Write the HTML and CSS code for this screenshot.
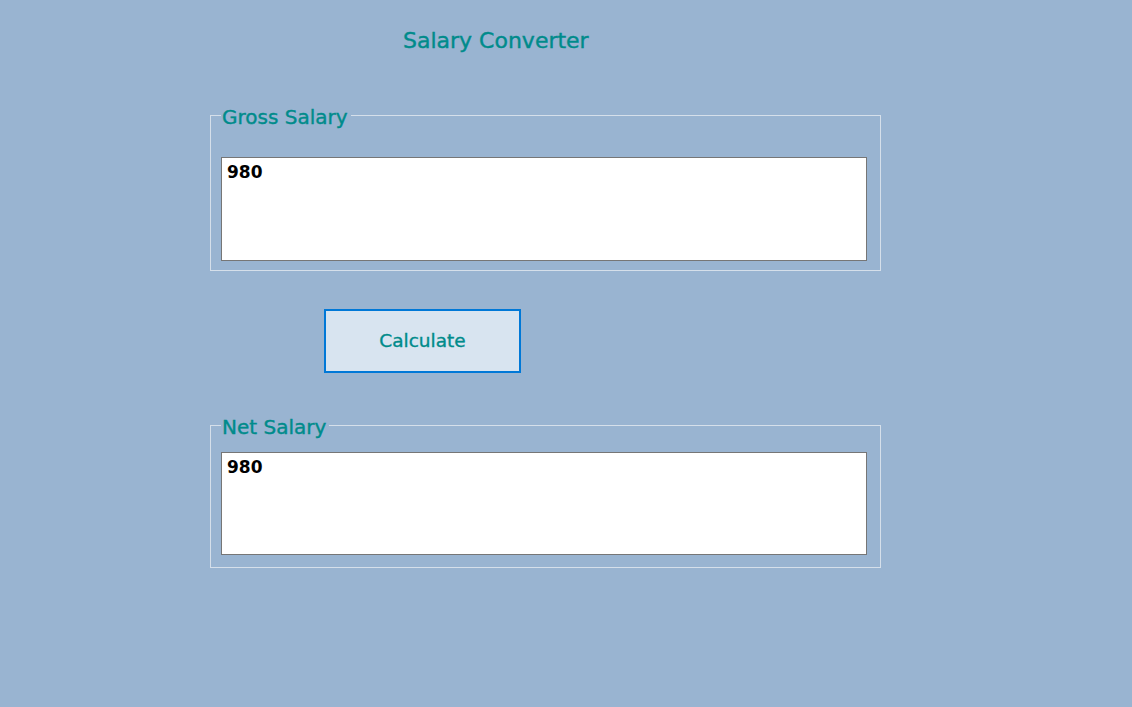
FILE: index.html
```html
<!DOCTYPE html>
<html lang="en">
<head>
<meta charset="utf-8">
<title>Salary Converter</title>
<link rel="stylesheet" href="styles.css">
</head>
<body>
<main class="form">
  <h1 class="title">Salary Converter</h1>
  <fieldset class="group group-gross">
    <legend class="group-label">Gross Salary</legend>
    <textarea class="textbox textbox-gross" readonly>980</textarea>
  </fieldset>
  <button class="calc-btn" type="button">Calculate</button>
  <fieldset class="group group-net">
    <legend class="group-label">Net Salary</legend>
    <textarea class="textbox textbox-net" readonly>980</textarea>
  </fieldset>
</main>
</body>
</html>
```

FILE: styles.css
```css
html, body {
  margin: 0;
  padding: 0;
}

body {
  background: #99b4d1;
  font-family: "DejaVu Sans", Verdana, sans-serif;
  color: #008b8b;
  width: 1132px;
  height: 707px;
  overflow: hidden;
}

.form {
  display: flex;
  flex-direction: column;
  align-items: flex-start;
  padding: 28px 0 0 210px;
}

.title {
  margin: 0 0 0 193px;
  font-size: 22px;
  line-height: 26px;
  font-weight: normal;
  color: #008b8b;
  -webkit-text-stroke: 0.4px #008b8b;
}

.group {
  box-sizing: border-box;
  width: 671px;
  min-width: 0;
  margin: 0;
  border: 1px solid #d5dfea;
  padding: 27px 13px 9px 10px;
}

.group-gross {
  margin-top: 46px;
}

.group-net {
  margin-top: 37px;
  padding-top: 12px;
  padding-bottom: 12px;
}

.group-label {
  font-size: 20px;
  line-height: 24px;
  padding: 5px 3px 1px 1px;
  color: #008b8b;
  -webkit-text-stroke: 0.4px #008b8b;
}

.textbox {
  display: block;
  box-sizing: border-box;
  width: 646px;
  height: 104px;
  margin: 0;
  padding: 4px 5px;
  border: 1px solid #767676;
  background: #ffffff;
  color: #000000;
  font-family: "DejaVu Sans", Verdana, sans-serif;
  font-size: 17px;
  font-weight: bold;
  line-height: 20px;
  resize: none;
  overflow: hidden;
  outline: none;
}

.textbox-net {
  height: 103px;
}

.calc-btn {
  box-sizing: border-box;
  margin: 38px 0 0 114px;
  width: 197px;
  height: 64px;
  border: 2px solid #0078d7;
  background: #d8e4f0;
  color: #008b8b;
  font-family: "DejaVu Sans", Verdana, sans-serif;
  font-size: 18.5px;
  padding: 0 0 2px;
  -webkit-text-stroke: 0.35px #008b8b;
}
```
